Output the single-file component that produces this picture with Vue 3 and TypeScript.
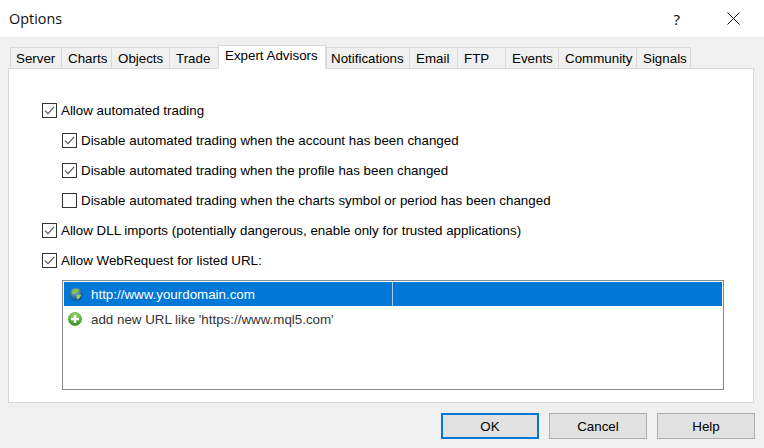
<template>
  <div class="dialog">
    <header class="titlebar">
      <span class="title">Options</span>
      <span class="help-mark">?</span>
      <svg class="close" width="13" height="13" viewBox="0 0 13 13">
        <path d="M0.5 0.5 L12.5 12.5 M12.5 0.5 L0.5 12.5" stroke="#111" stroke-width="1" fill="none" />
      </svg>
    </header>

    <div class="body">
      <nav class="tabs">
        <div
          v-for="tab in tabs"
          :key="tab.name"
          class="tab"
          :class="{ 'tab--active': tab.name === active }"
          :style="{ width: tab.width + 'px' }"
        >
          {{ tab.name }}
        </div>
      </nav>

      <section class="panel">
        <div
          v-for="opt in options"
          :key="opt.label"
          class="option"
          :class="{ 'option--sub': opt.sub }"
        >
          <span class="check">
            <svg v-if="opt.checked" width="13" height="13" viewBox="0 0 13 13">
              <path d="M2 6.6 L5 9.6 L11.2 2.8" stroke="#555" stroke-width="1.2" fill="none" />
            </svg>
          </span>
          <span>{{ opt.label }}</span>
        </div>

        <div class="url-list">
          <div class="url-row url-row--selected">
            <svg class="url-icon" width="14" height="14" viewBox="0 0 14 14">
              <defs>
                <radialGradient id="globe" cx="0.45" cy="0.35" r="0.7">
                  <stop offset="0" stop-color="#7fb7e6" />
                  <stop offset="1" stop-color="#0f3f73" />
                </radialGradient>
              </defs>
              <circle cx="7" cy="7" r="6.6" fill="url(#globe)" />
              <path d="M3 4 C5 1.5 9 1.5 10.5 3.5 C9.5 5 8 4.5 7 6 C6.5 7.5 4.5 7 3 7 Z" fill="#7cc63f" />
              <path d="M7.5 8 C9 7 11.5 7.5 12 8.5 C11 11 9.5 12 8 12.5 C7.5 11 8 9.5 7.5 8 Z" fill="#9ad458" />
            </svg>
            <span class="url-cell">http://www.yourdomain.com</span>
            <span class="url-rest"></span>
          </div>
          <div class="url-row">
            <svg class="url-icon url-icon--add" width="14" height="14" viewBox="0 0 14 14">
              <defs>
                <linearGradient id="plus" x1="0" y1="0" x2="0" y2="1">
                  <stop offset="0" stop-color="#8fdc5e" />
                  <stop offset="1" stop-color="#2f8f1c" />
                </linearGradient>
              </defs>
              <circle cx="7" cy="7" r="6.6" fill="url(#plus)" stroke="#4a9a33" stroke-width="0.6" />
              <path d="M7 3 V11 M3 7 H11" stroke="#fff" stroke-width="2.6" />
            </svg>
            <span class="url-cell url-cell--add">add new URL like 'https://www.mql5.com'</span>
          </div>
        </div>
      </section>

      <footer class="buttons">
        <button class="btn btn--default">OK</button>
        <button class="btn">Cancel</button>
        <button class="btn">Help</button>
      </footer>
    </div>
  </div>
</template>

<script setup lang="ts">
const active = "Expert Advisors"

const tabs = [
  { name: "Server", width: 51 },
  { name: "Charts", width: 50 },
  { name: "Objects", width: 58 },
  { name: "Trade", width: 49 },
  { name: "Expert Advisors", width: 108 },
  { name: "Notifications", width: 83 },
  { name: "Email", width: 48 },
  { name: "FTP", width: 48 },
  { name: "Events", width: 53 },
  { name: "Community", width: 78 },
  { name: "Signals", width: 55 },
]

const options = [
  { label: "Allow automated trading", checked: true, sub: false },
  { label: "Disable automated trading when the account has been changed", checked: true, sub: true },
  { label: "Disable automated trading when the profile has been changed", checked: true, sub: true },
  { label: "Disable automated trading when the charts symbol or period has been changed", checked: false, sub: true },
  { label: "Allow DLL imports (potentially dangerous, enable only for trusted applications)", checked: true, sub: false },
  { label: "Allow WebRequest for listed URL:", checked: true, sub: false },
]
</script>

<style>
html,
body {
  margin: 0;
  background: #f0f0f0;
}
</style>

<style scoped>
.dialog {
  width: 764px;
  height: 448px;
  font-family: "Liberation Sans", Arial, sans-serif;
  font-size: 13.35px;
  color: #000;
  overflow: hidden;
}

.titlebar {
  height: 37px;
  background: #fff;
  display: flex;
  align-items: center;
  padding: 0 24px 0 9px;
}

.title {
  font-family: "Open Sans", sans-serif;
  font-size: 14.4px;
  color: #111;
  flex: 1;
}

.help-mark {
  font-family: "Open Sans", sans-serif;
  font-size: 15px;
  margin-right: 47px;
}

.body {
  height: 411px;
  background: #f0f0f0;
  padding: 8px 9px 0 8px;
  box-sizing: border-box;
}

.tabs {
  display: flex;
  align-items: flex-end;
  height: 23px;
  padding-left: 2px;
  position: relative;
  z-index: 1;
}

.tab {
  height: 21px;
  box-sizing: border-box;
  border: 1px solid #d9d9d9;
  border-right-width: 0;
  border-bottom-width: 0;
  background: #f0f0f0;
  display: flex;
  align-items: center;
  padding: 1px 0 0 6px;
}

.tab:first-child {
  padding-left: 5px;
}

.tab:last-child {
  border-right-width: 1px;
}

.tab--active {
  height: 24px;
  margin-bottom: -1px;
  background: #fff;
  border-right-width: 1px;
  padding: 0 0 4px 6px;
}

.tab--active + .tab {
  padding-left: 4px;
}

.panel {
  height: 335px;
  margin-right: 1px;
  box-sizing: border-box;
  background: #fff;
  border: 1px solid #d9d9d9;
  padding: 31.6px 29px 0 33px;
}

.option {
  display: flex;
  align-items: center;
  gap: 4px;
  height: 20px;
  margin-bottom: 9.9px;
}

.option--sub {
  padding-left: 20px;
}

.check {
  width: 15px;
  height: 15px;
  box-sizing: border-box;
  border: 1px solid #333;
  background: #fff;
  display: flex;
  align-items: center;
  justify-content: center;
  flex: none;
}

.url-list {
  margin-left: 20px;
  height: 110px;
  box-sizing: border-box;
  border: 1px solid #828790;
  padding: 1px;
}

.url-row {
  height: 25px;
  display: flex;
  align-items: center;
  color: #333;
}

.url-row--selected {
  height: 24px;
  background: #0078d7;
  color: #fff;
}

.url-icon {
  flex: none;
  margin-left: 5px;
}

.url-icon--add {
  margin-left: 4px;
  margin-top: 2px;
}

.url-cell {
  width: 301px;
  height: 100%;
  line-height: 26px;
  padding-left: 8px;
  border-right: 1px solid #a7cdea;
}

.url-cell--add {
  width: auto;
  line-height: 27px;
  border-right: 0;
  padding-left: 9px;
}

.buttons {
  display: flex;
  justify-content: flex-end;
  gap: 10px;
  margin-top: 10px;
}

.btn {
  width: 98px;
  height: 26px;
  box-sizing: border-box;
  font: inherit;
  color: #000;
  background: #e1e1e1;
  border: 1px solid #adadad;
  padding: 0;
}

.btn--default {
  border: 2px solid #0078d7;
}
</style>
